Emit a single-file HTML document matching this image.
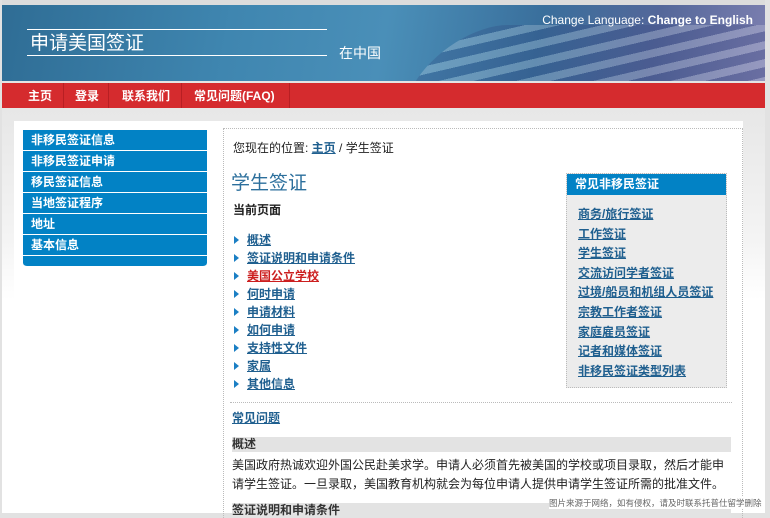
<!DOCTYPE html>
<html><head><meta charset="utf-8"><style>
*{margin:0;padding:0;box-sizing:border-box}
body{width:770px;height:513px;overflow:hidden;background:#e2e2e2;font-family:"Liberation Sans","Noto Sans CJK SC",sans-serif;font-size:12px;color:#222;position:relative}
.wrap{position:absolute;left:2px;top:0;width:763px;height:513px;background:linear-gradient(#dcdcdc,#f4f4f4 240px,#fff 300px)}
.hdr{position:absolute;left:0;top:5px;width:763px;height:76px;background:linear-gradient(100deg,#2f6d95 0%,#3f86b0 30%,#4a8fb8 50%,#3a6f9c 70%,#54679a 85%,#7c7fb0 100%);overflow:hidden}
.flag{position:absolute;left:420px;top:20px;width:420px;height:90px;background:repeating-linear-gradient(165deg,rgba(255,255,255,.35) 0 9px,rgba(40,50,110,.35) 9px 20px);transform:skewX(-30deg);opacity:.6;border-radius:60px 0 0 0}
.lang{position:absolute;right:12px;top:8px;color:#fff;font-size:12px}
.lang b{font-weight:bold}
.title{position:absolute;left:25px;top:24px;width:300px;border-top:1px solid #fff;border-bottom:1px solid #fff;color:#fff;font-size:19px;padding:4px 0 0 3px;height:27px;line-height:19px}
.sub{position:absolute;left:337px;top:38px;color:#fff;font-size:14px}
.nav{position:absolute;left:0;top:83px;width:763px;height:25px;background:#d52b2e;color:#fff;font-weight:bold;font-size:12px}
.nav span{float:left;height:25px;line-height:26px;border-right:1px solid #b81f23}
.main{position:absolute;left:12px;top:121px;width:729px;height:392px;background:#fff}
.side{position:absolute;left:9px;top:9px;width:184px}
.side div{background:#0282c5;color:#fff;font-weight:bold;height:21px;line-height:20px;padding-left:8px;border-bottom:1px solid #fff;font-size:12px}
.side .end{height:11px;border-radius:0 0 4px 4px}
.cont{position:absolute;left:209px;top:7px;width:520px;height:390px;border-left:1px dotted #bbb;border-top:1px dotted #bbb;border-right:1px dotted #bbb}
a{color:#1f5f8f;text-decoration:underline}
.bc{position:absolute;left:9px;top:10px;font-size:12px}
.bc a{font-weight:bold}
h1{position:absolute;left:7px;top:39px;font-size:19px;font-weight:normal;color:#2c6f9c}
.cur{position:absolute;left:9px;top:72px;font-weight:bold}
ul{position:absolute;left:8px;top:102px;list-style:none}
ul li{height:18px;line-height:18px;padding-left:15px;position:relative;font-size:12px}
ul li:before{content:"";position:absolute;left:2px;top:5px;border-left:5px solid #1b7fc4;border-top:4px solid transparent;border-bottom:4px solid transparent}
ul a{font-weight:bold}
ul a.red{color:#cc1f1f}
.hr{position:absolute;left:6px;top:273px;width:502px;border-top:1px dotted #bbb}
.faq{position:absolute;left:8px;top:280px;font-weight:bold}
.g{position:absolute;left:8px;width:499px;background:#e3e3e3;height:15px;line-height:15px;font-weight:bold;color:#333}
.p{position:absolute;left:8px;top:327px;width:502px;line-height:19px;font-size:12px}
.box{position:absolute;left:342px;top:44px;width:161px;height:215px;background:#ececec;border:1px dotted #bbb}
.box .bh{background:#0282c5;color:#fff;font-weight:bold;height:21px;line-height:20px;padding-left:8px}
.box .l{padding:10px 0 0 11px}
.box .l a{display:block;font-weight:bold;height:19.6px;line-height:19.6px}
.wm{position:absolute;left:549px;top:497px;font-size:8.5px;color:#666;white-space:nowrap;background:#fff}
</style></head><body>
<div class="wrap">
<div class="hdr"><div class="flag"></div>
<div class="lang">Change Language: <b>Change to English</b></div>
<div class="title">申请美国签证</div>
<div class="sub">在中国</div>
</div>
<div class="nav"><span style="width:62px;padding-left:26px">主页</span><span style="width:45px;padding-left:11px">登录</span><span style="width:73px;padding-left:13px">联系我们</span><span style="width:108px;padding-left:12px">常见问题(FAQ)</span></div>
<div class="main">
<div class="side"><div>非移民签证信息</div><div>非移民签证申请</div><div>移民签证信息</div><div>当地签证程序</div><div>地址</div><div>基本信息</div><div class="end"></div></div>
<div class="cont">
<div class="bc">您现在的位置: <a>主页</a> / 学生签证</div>
<h1>学生签证</h1>
<div class="cur">当前页面</div>
<ul><li><a>概述</a></li><li><a>签证说明和申请条件</a></li><li><a class="red">美国公立学校</a></li><li><a>何时申请</a></li><li><a>申请材料</a></li><li><a>如何申请</a></li><li><a>支持性文件</a></li><li><a>家属</a></li><li><a>其他信息</a></li></ul>
<div class="hr"></div>
<div class="faq"><a>常见问题</a></div>
<div class="g" style="top:308px">概述</div>
<div class="p">美国政府热诚欢迎外国公民赴美求学。申请人必须首先被美国的学校或项目录取，然后才能申请学生签证。一旦录取，美国教育机构就会为每位申请人提供申请学生签证所需的批准文件。</div>
<div class="g" style="top:374px">签证说明和申请条件</div>
<div class="box"><div class="bh">常见非移民签证</div><div class="l"><a>商务/旅行签证</a><a>工作签证</a><a>学生签证</a><a>交流访问学者签证</a><a>过境/船员和机组人员签证</a><a>宗教工作者签证</a><a>家庭雇员签证</a><a>记者和媒体签证</a><a>非移民签证类型列表</a></div></div>
</div>
</div>
</div>
<div class="wm">图片来源于网络，如有侵权，请及时联系托普仕留学删除</div>
</body></html>
